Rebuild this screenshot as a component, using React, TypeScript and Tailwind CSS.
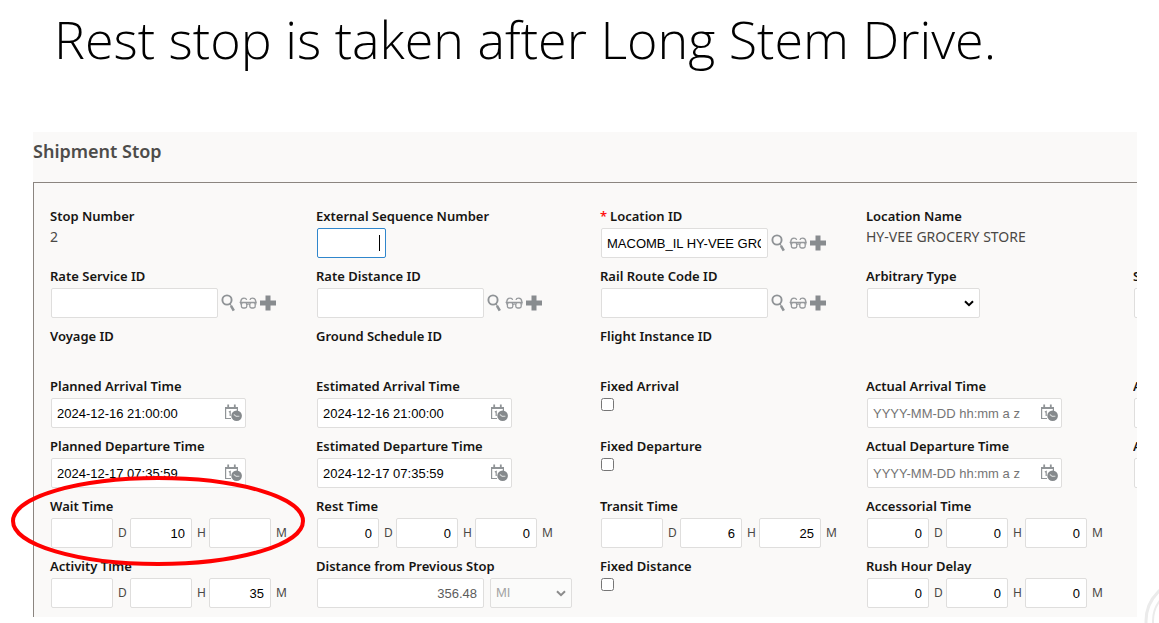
import { useId, type ReactNode } from "react";

const control =
  "block h-[30px] rounded-xs border pr-1.5 pl-[5px] font-['Liberation_Sans',Arial,sans-serif] text-[13px] outline-none";
const plain = "border-[#dfdedd] bg-white text-black";

interface FieldProps {
  label: string;
  required?: boolean;
  htmlFor?: string;
  className?: string;
  children?: ReactNode;
}

function Field({ label, required, htmlFor, className = "", children }: FieldProps) {
  return (
    <div className={className}>
      <label
        htmlFor={htmlFor}
        className="block h-[21px] text-[13px] leading-[18px] font-semibold whitespace-nowrap text-[#161513]"
      >
        {required && <span className="mr-[3px] text-[#ff1010]">*</span>}
        {label}
      </label>
      {children}
    </div>
  );
}

function ReadOnlyField({ label, value }: { label: string; value?: string }) {
  return (
    <Field label={label}>
      {value && <p className="text-sm leading-[18px] whitespace-nowrap text-[#4a4845]">{value}</p>}
    </Field>
  );
}

function SearchIcon() {
  return (
    <svg width="15" height="18" viewBox="0 0 15 18" fill="none" stroke="#8f9396" aria-hidden="true">
      <circle cx="6" cy="6" r="4.6" strokeWidth="1.9" />
      <path d="M9 10l1.4 1.8" strokeWidth="1.2" />
      <path d="M10 11.8l2.8 4.8" strokeWidth="2.6" />
    </svg>
  );
}

function GlassesIcon() {
  return (
    <svg width="18" height="14" viewBox="0 0 18 14" fill="none" stroke="#96999c" strokeWidth="1.3" aria-hidden="true">
      <rect x="2.4" y="6.6" width="5.4" height="5.4" rx="1.8" />
      <rect x="10.8" y="6.6" width="5.4" height="5.4" rx="1.8" />
      <path d="M0.6 6.4H17.6" />
      <path d="M7.8 8.4C8.6 7.8 10 7.8 10.8 8.4" />
      <path d="M1.8 8.4V5.4C2 3 3.2 2.2 5 2.2C6.6 2.2 7.4 2.8 7.6 4" />
      <path d="M16.8 8.4V5.4C16.6 3 15.4 2.2 13.6 2.2C12 2.2 11.2 2.8 11 4" />
    </svg>
  );
}

function PlusIcon() {
  return (
    <svg width="16" height="16" viewBox="0 0 16 16" fill="#888c8f" aria-hidden="true">
      <rect x="5.5" y="0.5" width="5" height="15" />
      <rect x="0" y="5.5" width="16" height="5" />
    </svg>
  );
}

interface LookupFieldProps {
  label: string;
  value?: string;
  required?: boolean;
}

function LookupField({ label, value = "", required }: LookupFieldProps) {
  const id = useId();
  return (
    <Field label={label} required={required} htmlFor={id}>
      <div className="flex items-center gap-[3px] pl-px">
        <input id={id} type="text" defaultValue={value} className={`${control} ${plain} w-[167px]`} />
        <button type="button" aria-label={`Find ${label}`}>
          <SearchIcon />
        </button>
        <button type="button" aria-label={`View ${label}`}>
          <GlassesIcon />
        </button>
        <button type="button" aria-label={`New ${label}`}>
          <PlusIcon />
        </button>
      </div>
    </Field>
  );
}

function CalendarClockIcon() {
  return (
    <svg width="19" height="18" viewBox="0 0 19 18" fill="none" aria-hidden="true">
      <path d="M7 14.5H1.6V4H13.4V7" stroke="#909497" strokeWidth="1.2" />
      <path d="M1 3H14V5H1Z" fill="#909497" />
      <path d="M4.2 0.6V3.6M10.8 0.6V3.6" stroke="#909497" strokeWidth="1.8" />
      <path d="M4.8 8L6.2 7.4V12" stroke="#909497" strokeWidth="1.2" />
      <circle cx="12.6" cy="11.8" r="5.3" fill="#85898c" />
      <path d="M9.8 10.5L12.4 12.4L15.4 12.2" stroke="#d4d6d6" strokeWidth="1.1" />
    </svg>
  );
}

function DateTimeField({ label, value }: { label: string; value?: string }) {
  const id = useId();
  return (
    <Field label={label} htmlFor={id}>
      <div className="relative ml-px w-[195px]">
        <input
          id={id}
          type="text"
          defaultValue={value}
          placeholder="YYYY-MM-DD hh:mm a z"
          className={`${control} ${plain} w-full placeholder:text-[#757575]`}
        />
        <button type="button" aria-label={`Choose ${label}`} className="absolute top-1.5 right-[3px]">
          <CalendarClockIcon />
        </button>
      </div>
    </Field>
  );
}

function DurationField({ label, values }: { label: string; values: [string, string, string] }) {
  const id = useId();
  const units = ["D", "H", "M"];
  return (
    <Field label={label} htmlFor={`${id}-D`}>
      <div className="flex items-center pl-px">
        {units.map((unit, i) => (
          <div key={unit} className="flex items-center">
            <input
              id={`${id}-${unit}`}
              type="text"
              aria-label={i > 0 ? `${label} ${unit}` : undefined}
              defaultValue={values[i]}
              className={`${control} ${plain} w-[62px] text-right`}
            />
            <span className="w-[17px] pl-[5px] text-xs text-[#4a4845]">{unit}</span>
          </div>
        ))}
      </div>
    </Field>
  );
}

function CheckField({ label }: { label: string }) {
  const id = useId();
  return (
    <Field label={label} htmlFor={id}>
      <input id={id} type="checkbox" className="ml-px block size-[13px]" />
    </Field>
  );
}

interface SelectBoxProps {
  id?: string;
  ariaLabel?: string;
  options: string[];
  disabled?: boolean;
  className: string;
}

function SelectBox({ id, ariaLabel, options, disabled, className }: SelectBoxProps) {
  return (
    <div className={`relative ${className}`}>
      <select
        id={id}
        aria-label={ariaLabel}
        disabled={disabled}
        className={`${control} ${plain} w-full appearance-none disabled:bg-[#fbfbfa] disabled:text-[#a3a3a3]`}
      >
        {options.map((o) => (
          <option key={o}>{o}</option>
        ))}
      </select>
      <svg
        className="pointer-events-none absolute top-3 right-1.5"
        width="10"
        height="7"
        viewBox="0 0 10 7"
        fill="none"
        stroke={disabled ? "#8c8c8c" : "#000"}
        strokeWidth="2"
        aria-hidden="true"
      >
        <path d="M1 1.2L5 5.2L9 1.2" />
      </svg>
    </div>
  );
}

// Fields of the next column, of which only the left edge shows
function CutOffField({ label }: { label: string }) {
  const id = useId();
  return (
    <Field label={label} htmlFor={id} className="overflow-hidden">
      <input id={id} type="text" className={`${control} ${plain} ml-px w-[167px]`} />
    </Field>
  );
}

function Highlight() {
  return (
    <svg
      className="pointer-events-none absolute -top-[21px] -left-[39px]"
      width="294"
      height="90"
      viewBox="0 0 294 90"
      fill="none"
      aria-hidden="true"
    >
      <ellipse cx="147" cy="45" rx="145" ry="43" stroke="#ff0000" strokeWidth="4" />
    </svg>
  );
}

export default function App() {
  return (
    <main className="relative min-h-screen bg-white pb-1.5 font-['Noto_Sans','Open_Sans',sans-serif]">
      <h1 className="h-[132px] pt-[3px] pl-[54px] font-['Open_Sans',sans-serif] text-[52px] leading-[72px] font-[330] whitespace-nowrap text-black">
        Rest stop is taken after Long Stem Drive.
      </h1>

      <section className="mr-[22px] ml-[33px] bg-[#faf9f8]">
        <h2 className="h-[50px] pt-[5px] text-lg leading-7 font-semibold text-[#4d4c4a]">Shipment Stop</h2>

        <form className="border-t border-l border-[#8b8580] pt-6 pb-2 pl-4">
          <div className="grid grid-cols-[266fr_284fr_266fr_267fr_4px] grid-rows-[60px_60px_50px_60px_60px_60px_52px]">
            <ReadOnlyField label="Stop Number" value="2" />
            <Field label="External Sequence Number" htmlFor="sequence">
              <div className="relative ml-px w-[69px]">
                <input
                  id="sequence"
                  type="text"
                  className={`${control} w-full border-[#2f86cc] bg-white text-right text-black caret-transparent`}
                />
                <span className="absolute top-[7px] right-1.5 h-4 w-px bg-black" />
              </div>
            </Field>
            <LookupField label="Location ID" value="MACOMB_IL HY-VEE GROCERY" required />
            <ReadOnlyField label="Location Name" value="HY-VEE GROCERY STORE" />
            <div />

            <LookupField label="Rate Service ID" />
            <LookupField label="Rate Distance ID" />
            <LookupField label="Rail Route Code ID" />
            <Field label="Arbitrary Type" htmlFor="arbitrary">
              <SelectBox id="arbitrary" options={[""]} className="ml-px w-[113px]" />
            </Field>
            <CutOffField label="S" />

            <ReadOnlyField label="Voyage ID" />
            <ReadOnlyField label="Ground Schedule ID" />
            <ReadOnlyField label="Flight Instance ID" />
            <div />
            <div />

            <DateTimeField label="Planned Arrival Time" value="2024-12-16 21:00:00" />
            <DateTimeField label="Estimated Arrival Time" value="2024-12-16 21:00:00" />
            <CheckField label="Fixed Arrival" />
            <DateTimeField label="Actual Arrival Time" />
            <CutOffField label="A" />

            <DateTimeField label="Planned Departure Time" value="2024-12-17 07:35:59" />
            <DateTimeField label="Estimated Departure Time" value="2024-12-17 07:35:59" />
            <CheckField label="Fixed Departure" />
            <DateTimeField label="Actual Departure Time" />
            <CutOffField label="A" />

            <div className="relative z-10">
              <DurationField label="Wait Time" values={["", "10", ""]} />
              <Highlight />
            </div>
            <DurationField label="Rest Time" values={["0", "0", "0"]} />
            <DurationField label="Transit Time" values={["", "6", "25"]} />
            <DurationField label="Accessorial Time" values={["0", "0", "0"]} />
            <div />

            <DurationField label="Activity Time" values={["", "", "35"]} />
            <Field label="Distance from Previous Stop" htmlFor="distance">
              <div className="flex gap-1.5 pl-px">
                <input
                  id="distance"
                  type="text"
                  readOnly
                  defaultValue="356.48"
                  className={`${control} w-[167px] border-[#dfdedd] bg-white text-right text-[#5c5c5c]`}
                />
                <SelectBox ariaLabel="Distance unit" options={["MI"]} disabled className="w-[82px]" />
              </div>
            </Field>
            <CheckField label="Fixed Distance" />
            <DurationField label="Rush Hour Delay" values={["0", "0", "0"]} />
            <div />
          </div>
        </form>
      </section>

      <svg
        className="absolute right-0 bottom-0"
        width="16"
        height="44"
        viewBox="0 0 16 44"
        fill="none"
        stroke="#ebebeb"
        aria-hidden="true"
      >
        <circle cx="44" cy="42" r="41" strokeWidth="3" />
        <circle cx="44" cy="42" r="34" strokeWidth="2" />
      </svg>
    </main>
  );
}
